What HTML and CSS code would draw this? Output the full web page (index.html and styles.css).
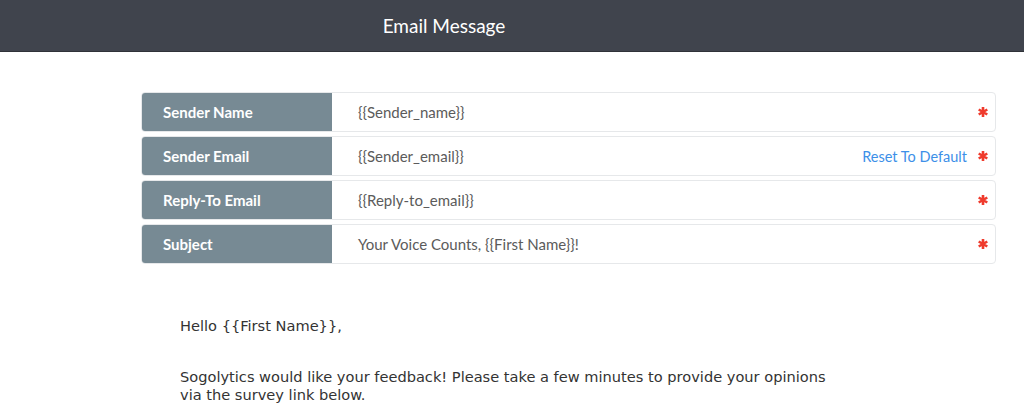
FILE: index.html
```html
<!DOCTYPE html>
<html lang="en">
<head>
    <meta charset="UTF-8">
    <meta name="viewport" content="width=device-width, initial-scale=1.0">
    <title>Email Message</title>
    <link rel="stylesheet" href="styles.css">
</head>
<body>
    <div class="header">
        <h1>Email Message</h1>
    </div>
    <div class="container">
        <div class="form">
            <div class="row">
                <div class="label">Sender Name</div>
                <div class="value">{{Sender_name}}</div>
                <span class="req"><svg viewBox="0 0 12 12"><path d="M6 1v10M1.7 3.5l8.6 5M1.7 8.5l8.6-5"/></svg></span>
            </div>
            <div class="row">
                <div class="label">Sender Email</div>
                <div class="value">{{Sender_email}}</div>
                <a class="reset" href="#">Reset To Default</a>
                <span class="req"><svg viewBox="0 0 12 12"><path d="M6 1v10M1.7 3.5l8.6 5M1.7 8.5l8.6-5"/></svg></span>
            </div>
            <div class="row">
                <div class="label">Reply-To Email</div>
                <div class="value">{{Reply-to_email}}</div>
                <span class="req"><svg viewBox="0 0 12 12"><path d="M6 1v10M1.7 3.5l8.6 5M1.7 8.5l8.6-5"/></svg></span>
            </div>
            <div class="row">
                <div class="label">Subject</div>
                <div class="value">Your Voice Counts, {{First Name}}!</div>
                <span class="req"><svg viewBox="0 0 12 12"><path d="M6 1v10M1.7 3.5l8.6 5M1.7 8.5l8.6-5"/></svg></span>
            </div>
        </div>
        <div class="body">
            <p>Hello {{First Name}},</p>
            <p>Sogolytics would like your feedback! Please take a few minutes to provide your opinions<br>via the survey link below.</p>
        </div>
    </div>
</body>
</html>
```
FILE: styles.css
```css
body {
    margin: 0;
    height: 100vh;
    background-color: #fff;
    font-family: Lato, 'Open Sans', sans-serif;
    overflow: hidden;
}
.header {
    height: 51px;
    background-color: #40444d;
    display: flex;
    align-items: center;
    justify-content: center;
    padding-right: 136px;
    border-bottom: 1px solid #2f3238;
}
.header h1 {
    margin: 0;
    color: #fff;
    font-size: 19px;
    font-weight: 400;
}
.container {
    padding: 40px 28px 0 141px;
}
.form {
    display: flex;
    flex-direction: column;
    gap: 4px;
}
.row {
    display: flex;
    align-items: center;
    height: 38px;
    border: 1px solid #e6e8ea;
    border-radius: 4px;
    overflow: hidden;
}
.label {
    width: 190px;
    align-self: stretch;
    display: flex;
    align-items: center;
    padding-left: 21px;
    box-sizing: border-box;
    background-color: #778a94;
    color: #fff;
    font-size: 15px;
    font-weight: 700;
}
.value {
    flex: 1;
    padding-left: 26px;
    color: #5b5b5b;
    font-size: 15px;
}
.reset {
    color: #3d8fe8;
    font-size: 14.5px;
    text-decoration: none;
    margin-right: 10px;
}
.req {
    width: 12px;
    height: 12px;
    margin-right: 6px;
    display: flex;
}
.req svg {
    width: 12px;
    height: 12px;
    stroke: #ef3b2d;
    stroke-width: 2.6;
    fill: none;
}
.body {
    padding: 53px 0 0 39px;
    font-family: 'DejaVu Sans', sans-serif;
    font-size: 14.6px;
    color: #333;
}
.body p {
    margin: 0 0 33px;
    line-height: 18px;
}
```
